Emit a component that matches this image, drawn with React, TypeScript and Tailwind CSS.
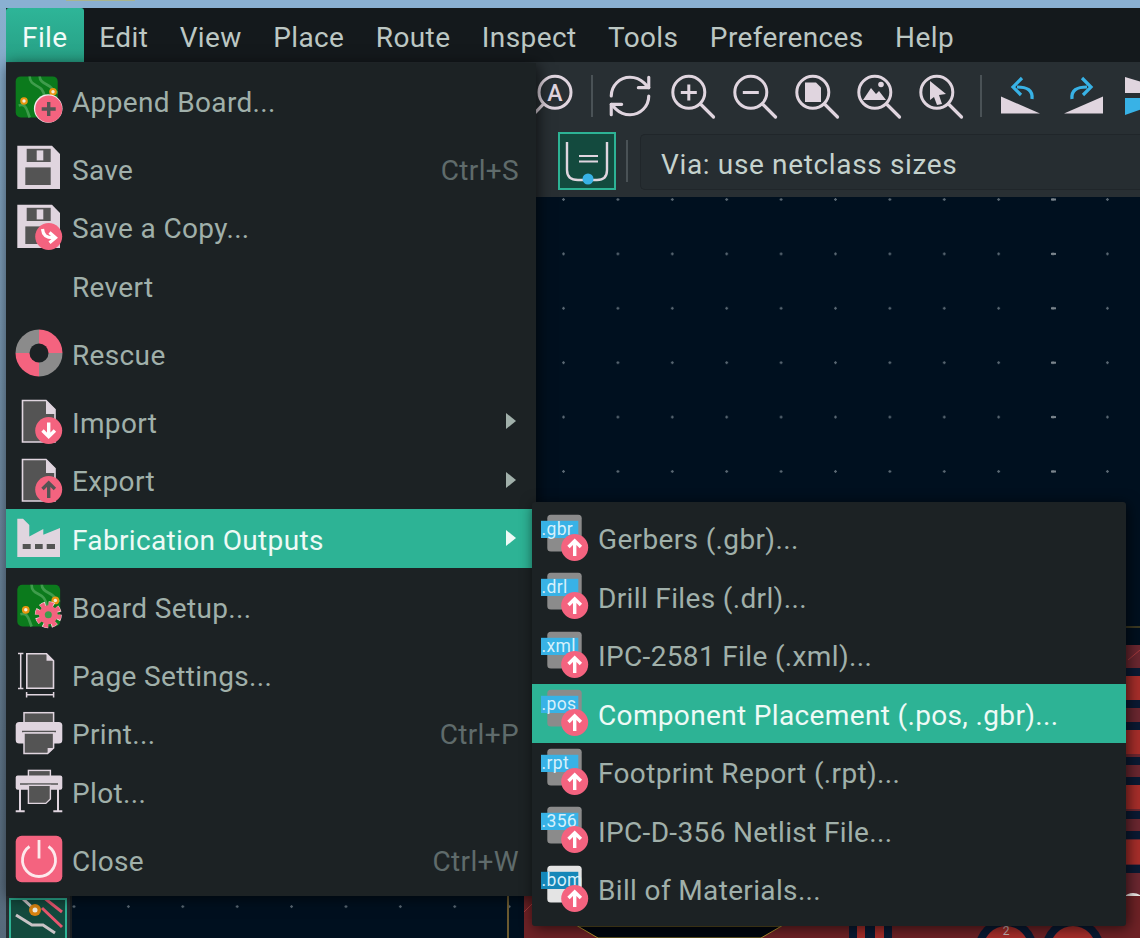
import { ReactNode } from "react";
import { RefreshCw } from "lucide-react";

const LIGHT = "#e0d5df";
const DARK = "#545454";
const PINK = "#f4637f";
const GREY = "#8b8b8b";
const BLUE = "#38b2e6";

const Icon = ({ children }: { children?: ReactNode }) => (
  <svg width="48" height="48" viewBox="0 0 48 48" className="shrink-0">
    {children}
  </svg>
);

// pink round badge that sits on the lower right of most menu icons
const Badge = ({ children, cx = 33.7, cy = 33.5 }: { children?: ReactNode; cx?: number; cy?: number }) => (
  <g>
    <circle cx={cx} cy={cy} r="13.5" fill={PINK} />
    {children}
  </g>
);

const ArrowUp = ({ color = "#fff" }: { color?: string }) => (
  <path d="M33.7 42V27M27.5 33l6.2-6.2 6.2 6.2" fill="none" stroke={color} strokeWidth="3.4" />
);

const ArrowDown = () => (
  <path d="M33.7 25.5v14M27.5 33.5l6.2 6.2 6.2-6.2" fill="none" stroke="#fff" strokeWidth="3.4" />
);

const Floppy = () => (
  <>
    <path d="M2.3 1.8H37L45 10V45H2.3Z" fill={LIGHT} />
    <rect x="11.7" y="4.8" width="24" height="13.2" fill={DARK} />
    <rect x="21.7" y="6.4" width="6.6" height="10" fill={LIGHT} />
    <rect x="10.3" y="23.4" width="25.4" height="17.6" fill={DARK} />
  </>
);

const DocBadge = ({ children }: { children: ReactNode }) => (
  <>
    <path d="M7.5 3.5H31L40 12.5V45H7.5Z" fill={DARK} stroke={LIGHT} strokeWidth="1.6" />
    <path d="M31 3.5L40 12.5V17H31Z" fill={LIGHT} />
    {children}
  </>
);

const BoardBase = ({ x, y, s }: { x: number; y: number; s: number }) => (
  <g transform={`translate(${x} ${y}) scale(${s})`}>
    <rect width="42" height="41" rx="5" fill="#0b7a1c" />
    <path d="M14 0c0 9 8 8 12 13s2 12 8 15M24 0c0 6 6 7 10 10s4 6 8 6M3 29c8-2 8 5 11 12" fill="none" stroke="#3f9c4c" strokeWidth="2.6" />
    <circle cx="8.3" cy="24.6" r="3.8" fill="#e8960f" />
    <circle cx="8.3" cy="24.6" r="1.7" fill="#f4eeda" />
    <circle cx="37.3" cy="15.4" r="3.8" fill="#e8960f" />
    <circle cx="37.3" cy="15.4" r="1.7" fill="#f4eeda" />
  </g>
);

const AppendIcon = () => (
  <Icon>
    <BoardBase x={0.7} y={0.4} s={1} />
    <circle cx="33.2" cy="32.5" r="14.3" fill="#f2ecef" />
    <Badge cy={33}>
      <path d="M33.7 26v14M26.7 33h14" stroke={DARK} strokeWidth="3.4" />
    </Badge>
  </Icon>
);

const SaveIcon = () => (
  <Icon>
    <Floppy />
  </Icon>
);

const SaveCopyIcon = () => (
  <Icon>
    <Floppy />
    <Badge>
      <path d="M27.5 26c.5 6 3.5 8.7 10.5 8.7" fill="none" stroke="#fff" strokeWidth="3.2" />
      <path d="M34.5 29.5l6 5.2-6 5" fill="none" stroke="#fff" strokeWidth="3.2" />
    </Badge>
  </Icon>
);

const RescueIcon = () => (
  <Icon>
    <path d="M24 .5A23.5 23.5 0 0 0 .5 24H24Z" fill={GREY} />
    <path d="M24 .5A23.5 23.5 0 0 1 47.5 24H24Z" fill={PINK} />
    <path d="M24 47.5A23.5 23.5 0 0 1 .5 24H24Z" fill={PINK} />
    <path d="M24 47.5A23.5 23.5 0 0 0 47.5 24H24Z" fill={GREY} />
    <circle cx="24" cy="24" r="9.5" fill="#1c2224" />
  </Icon>
);

const ImportIcon = () => (
  <Icon>
    <DocBadge>
      <Badge>
        <ArrowDown />
      </Badge>
    </DocBadge>
  </Icon>
);

const ExportIcon = () => (
  <Icon>
    <DocBadge>
      <Badge>
        <ArrowUp color={DARK} />
      </Badge>
    </DocBadge>
  </Icon>
);

const FactoryIcon = () => (
  <Icon>
    <path d="M2.3 4.8H8L14.3 11V22.4L28.3 15V20.7L45 14V43H2.3Z" fill={LIGHT} />
    <rect x="7.7" y="30" width="8" height="5" fill={DARK} />
    <rect x="20" y="30" width="7.7" height="5" fill={DARK} />
    <rect x="31.7" y="30" width="8.3" height="5" fill={DARK} />
  </Icon>
);

const BoardSetupIcon = () => (
  <Icon>
    <BoardBase x={2.3} y={2.7} s={1.02} />
    <circle cx="33.3" cy="32.7" r="10.5" fill="none" stroke="#f6e3e6" strokeWidth="6" strokeDasharray="5.2 3.05" />
    <circle cx="33.3" cy="32.7" r="10.5" fill="none" stroke={PINK} strokeWidth="5" strokeDasharray="4.5 3.75" />
    <circle cx="33.3" cy="32.7" r="9.5" fill={PINK} />
    <circle cx="33.3" cy="32.7" r="3.5" fill="#3f9c4c" />
  </Icon>
);

const PageIcon = () => (
  <Icon>
    <path d="M11.8 3.8H31.5L38.5 10.8V38.2H11.8Z" fill={DARK} stroke={LIGHT} strokeWidth="1.6" />
    <path d="M31.5 3.8L38.5 10.8H31.5Z" fill={LIGHT} />
    <path d="M5.7 3v36M3 3.6h5.4M3 38.4h5.4M11 44.7h28.3M11.6 42v5.4M38.6 42v5.4" stroke={LIGHT} strokeWidth="1.5" fill="none" />
  </Icon>
);

const PrintIcon = () => (
  <Icon>
    <rect x="9" y="3.7" width="29.6" height="12" fill={DARK} stroke={LIGHT} strokeWidth="1.5" />
    <rect x=".7" y="13" width="46.6" height="21.6" rx="3.5" fill={LIGHT} />
    <path d="M7 22.6H41" stroke={DARK} strokeWidth="1.5" />
    <path d="M9 24H38.6V39L32.6 44.6H9Z" fill={DARK} stroke={LIGHT} strokeWidth="1.5" />
    <path d="M32.6 44.6V39H38.6Z" fill={LIGHT} />
  </Icon>
);

const PlotIcon = () => (
  <Icon>
    <rect x="13.4" y="3.4" width="22" height="8" fill={DARK} stroke={LIGHT} strokeWidth="1.4" />
    <rect x=".7" y="8.4" width="46.6" height="14.3" rx="2" fill={LIGHT} />
    <path d="M5 17H43" stroke={DARK} strokeWidth="1.4" />
    <path d="M5 22v21.8M43 22v21.8M.7 44.2h9M38.3 44.2h9" stroke={LIGHT} strokeWidth="2" fill="none" />
    <path d="M13.4 18.4H35.4V32L30.8 36.4H13.4Z" fill={DARK} stroke={LIGHT} strokeWidth="1.4" />
  </Icon>
);

const CloseIcon = () => (
  <Icon>
    <rect x=".7" y=".7" width="46.6" height="46.6" rx="6" fill={PINK} />
    <path d="M14.5 11.5A16.5 16.5 0 1 0 33.5 11.5" fill="none" stroke="#fde9ec" strokeWidth="2.8" />
    <path d="M24 5v18.5" stroke="#fde9ec" strokeWidth="2.8" />
  </Icon>
);

const ExtIcon = ({ ext, bom }: { ext: string; bom?: boolean }) => (
  <Icon>
    <rect x="6.3" y=".8" width="34.4" height="36.6" rx="3.5" fill={bom ? "#e4e4e4" : GREY} />
    <rect y="6.8" width="37.3" height="17.2" fill={bom ? "#1587b8" : BLUE} />
    <text x=".5" y="20.5" fontSize="17.5" fill="#d6f0fb" fontFamily="Roboto, sans-serif">
      {ext}
    </text>
    <Badge>
      <ArrowUp />
    </Badge>
  </Icon>
);

type Item = { label: string; icon?: ReactNode; shortcut?: string; submenu?: boolean; active?: boolean };

const fileMenu: (Item | "sep")[] = [
  { label: "Append Board...", icon: <AppendIcon /> },
  "sep",
  { label: "Save", icon: <SaveIcon />, shortcut: "Ctrl+S" },
  { label: "Save a Copy...", icon: <SaveCopyIcon /> },
  { label: "Revert" },
  "sep",
  { label: "Rescue", icon: <RescueIcon /> },
  "sep",
  { label: "Import", icon: <ImportIcon />, submenu: true },
  { label: "Export", icon: <ExportIcon />, submenu: true },
  { label: "Fabrication Outputs", icon: <FactoryIcon />, submenu: true, active: true },
  "sep",
  { label: "Board Setup...", icon: <BoardSetupIcon /> },
  "sep",
  { label: "Page Settings...", icon: <PageIcon /> },
  { label: "Print...", icon: <PrintIcon />, shortcut: "Ctrl+P" },
  { label: "Plot...", icon: <PlotIcon /> },
  "sep",
  { label: "Close", icon: <CloseIcon />, shortcut: "Ctrl+W" },
];

const fabMenu: Item[] = [
  { label: "Gerbers (.gbr)...", icon: <ExtIcon ext=".gbr" /> },
  { label: "Drill Files (.drl)...", icon: <ExtIcon ext=".drl" /> },
  { label: "IPC-2581 File (.xml)...", icon: <ExtIcon ext=".xml" /> },
  { label: "Component Placement (.pos, .gbr)...", icon: <ExtIcon ext=".pos" />, active: true },
  { label: "Footprint Report (.rpt)...", icon: <ExtIcon ext=".rpt" /> },
  { label: "IPC-D-356 Netlist File...", icon: <ExtIcon ext=".356" /> },
  { label: "Bill of Materials...", icon: <ExtIcon ext=".bom" bom /> },
];

const MenuRow = ({ label, icon, shortcut, submenu, active }: Item) => (
  <div className={`h-[58.5px] flex items-center pl-[9px] pr-[17px] tracking-[0.35px] ${active ? "bg-[#2db395] text-[#eefaf6]" : "text-[#a0b0aa]"}`}>
    {icon ?? <div className="w-12 h-12 shrink-0" />}
    <span className="ml-[9px] pt-[5px] leading-none">{label}</span>
    {shortcut && <span className="ml-auto pt-[5px] leading-none text-[#5f6b6b]">{shortcut}</span>}
    {submenu && (
      <div className={`ml-auto mr-[3px] w-0 h-0 border-y-[8px] border-y-transparent border-l-[10px] ${active ? "border-l-[#eefaf6]" : "border-l-[#a0b0aa]"}`} />
    )}
  </div>
);

const Magnifier = ({ children }: { children?: ReactNode }) => (
  <Icon>
    <circle cx="20.8" cy="20.3" r="16" fill="none" stroke={LIGHT} strokeWidth="3" />
    <path d="M32.5 32l13 13" stroke={LIGHT} strokeWidth="3.2" strokeLinecap="round" />
    {children}
  </Icon>
);

const UndoIcon = ({ flip }: { flip?: boolean }) => (
  <svg width="48" height="48" viewBox="0 0 48 48" className={`shrink-0 ${flip ? "-scale-x-100" : ""}`}>
    <path d="M4 24.5L43 41.5H4Z" fill={LIGHT} />
    <path d="M35 27C36 18 30 15 20 15" fill="none" stroke={BLUE} strokeWidth="3.2" />
    <path d="M25 6L16 15L24 23" fill="none" stroke={BLUE} strokeWidth="3.2" />
  </svg>
);

const menuNames = ["Edit", "View", "Place", "Route", "Inspect", "Tools", "Preferences", "Help"];

export default function App() {
  return (
    <div className="relative w-[1140px] h-[938px] overflow-hidden flex flex-col bg-gradient-to-b from-[#8ab0cf] to-[#56697a] [font-family:Roboto,sans-serif] text-[28px]">
      {/* window manager strip */}
      <div className="h-[8px] shrink-0 bg-[#8ab0d2]">
        <div className="ml-[66px] w-[69px] h-[1px] bg-[#a9b58f]" />
      </div>

      <div className="flex-1 min-h-0 ml-[6px] flex flex-col">
        <div className="h-[54px] shrink-0 flex bg-[#14191c] text-[#bcc7c3] tracking-[0.4px]">
          <div className="px-[16px] pt-[6px] flex items-center rounded-t-[3px] bg-gradient-to-b from-[#2eb598] to-[#27a085] text-[#f2fbf8] leading-none">
            File
          </div>
          {menuNames.map((name) => (
            <div key={name} className="px-[15.7px] pt-[6px] flex items-center leading-none">
              {name}
            </div>
          ))}
        </div>

        {/* top toolbar, the left part of it is hidden under the open menu */}
        <div className="h-[67px] shrink-0 flex items-center pl-[525px] gap-[14px] bg-[#282f33] overflow-hidden">
          <Icon>
            <circle cx="24" cy="20.3" r="16" fill="none" stroke={LIGHT} strokeWidth="3" />
            <path d="M12.5 32L0 45" stroke={LIGHT} strokeWidth="3.2" strokeLinecap="round" />
            <text x="24" y="28.5" textAnchor="middle" fontSize="23" fontWeight="500" fill={LIGHT} fontFamily="Roboto, sans-serif">
              A
            </text>
          </Icon>
          <div className="w-[2px] h-[42px] shrink-0 -mx-[2px] bg-[#4a5256]" />
          <RefreshCw size={50} color={LIGHT} strokeWidth={1.5} className="shrink-0 -mr-[1px]" />
          <Magnifier>
            <path d="M20.8 12.5v16M12.8 20.5h16" stroke={LIGHT} strokeWidth="3" />
          </Magnifier>
          <Magnifier>
            <path d="M12.8 20.5h16" stroke={LIGHT} strokeWidth="3" />
          </Magnifier>
          <Magnifier>
            <path d="M13 10.5H24L29 15.5V30H13Z" fill={LIGHT} />
          </Magnifier>
          <Magnifier>
            <path d="M9 28L17 16L22 22L25 19L32 28Z" fill={LIGHT} />
            <circle cx="27" cy="12.5" r="2.8" fill={LIGHT} />
          </Magnifier>
          <Magnifier>
            <path d="M14 9L30 22L23 23L26 32L21 33L18 25L14 28Z" fill={LIGHT} />
          </Magnifier>
          <div className="w-[2px] h-[42px] shrink-0 ml-[2px] mr-[1px] bg-[#4a5256]" />
          <UndoIcon />
          <UndoIcon flip />
          <svg width="48" height="48" viewBox="0 0 48 48" className="shrink-0">
            <path d="M4 5L30 13V21H4Z" fill={LIGHT} />
            <path d="M4 26H30V34L4 43Z" fill={BLUE} />
          </svg>
        </div>

        <div className="h-[68px] shrink-0 flex items-center pl-[552px] pb-[4px] bg-[#282f33] overflow-hidden">
          <div className="w-[58px] h-[58px] shrink-0 border-2 border-[#2db395] bg-[#134a3e]">
            <svg width="54" height="54" viewBox="0 0 54 54">
              <path d="M7 8V36C7 43 11 46 18 46H37C43 46 47 43 47 36V8" fill="none" stroke={LIGHT} strokeWidth="2.4" />
              <path d="M19 22H38M19 27.5H38" stroke={LIGHT} strokeWidth="2.2" />
              <circle cx="28" cy="45" r="5.5" fill={BLUE} />
            </svg>
          </div>
          <div className="w-[2px] h-[42px] shrink-0 ml-[10px] mr-[12px] bg-[#4a5256]" />
          <div className="flex-1 h-[56px] mt-[2px] flex items-center pl-[20px] pt-[6px] rounded-l-[5px] border border-r-0 border-[#20262a] bg-[#262d31] text-[#c5d2cd] leading-none tracking-[0.65px]">
            Via: use netclass sizes
          </div>
        </div>

        <div className="flex-1 min-h-0 flex">
          <div className="w-[66px] shrink-0 flex flex-col justify-end items-start bg-[#282f33] border-r-2 border-[#1b2023]">
            <div className="w-[58px] h-[58px] shrink-0 ml-[3px] -mb-[18px] border-2 border-[#2db395] bg-[#134a3e]">
              <svg width="54" height="54" viewBox="0 0 54 54">
                <path d="M32 -3L51 12M31 8L51 27" fill="none" stroke="#e8566f" strokeWidth="3" />
                <path d="M11 -2L24 10M5 15L21 25H32L44 33" fill="none" stroke="#c9c3c6" strokeWidth="3" />
                <circle cx="24" cy="10" r="6" fill="#d98310" />
                <circle cx="24" cy="10" r="2.5" fill="#f2eee0" />
              </svg>
            </div>
          </div>
          <div className="relative flex-1 bg-[#00101f] bg-[radial-gradient(circle,#5a6873_1px,transparent_1.5px)] bg-[length:54.4px_54.4px] bg-[position:-25.2px_-24.7px]">
            {/* board drawing, coordinates are page pixels */}
            <svg className="absolute left-0 top-0" width="1068" height="741" viewBox="72 197 1068 741">
              {Array.from({ length: 14 }, (_, i) => (
                <rect key={i} x="1051" y={198.5 + i * 54.4} width="5" height="2" fill="#7a848c" />
              ))}
              <path d="M1126 627H1140" stroke="#3d3a22" strokeWidth="2" />
              <path d="M508 896V938" stroke="#6b5a30" strokeWidth="2" />
              <rect x="1126" y="645" width="14" height="293" fill="#6b2730" />
              <path d="M1128 660L1140 650" stroke="#a83a3c" strokeWidth="1" />
              {[668, 700, 722, 757, 777, 811, 831, 865].map((y) => (
                <rect key={y} x="1126" y={y} width="14" height="8" fill="#0a1a33" />
              ))}
              {[676, 730, 785, 840].map((y) => (
                <rect key={y} x="1126" y={y} width="14" height="24" fill="#a72e2a" />
              ))}
              <circle cx="1133" cy="906" r="13" fill="#f1ecea" />
              <circle cx="1133" cy="906" r="6.5" fill="#d9a21c" />
              <rect x="524" y="896" width="616" height="42" fill="#6e2226" />
              <path d="M524 912L536 900" stroke="#a83a3c" strokeWidth="1" />
              <path d="M577.5 926L598 938H761L781.6 926Z" fill="#00060f" stroke="#b39432" strokeWidth="1" />
              <rect x="849" y="926" width="8" height="12" fill="#0a1a33" />
              <rect x="857" y="926" width="8" height="12" fill="#a72e2a" />
              <rect x="865" y="926" width="10" height="12" fill="#0a1a33" />
              <rect x="875" y="926" width="9" height="12" fill="#a72e2a" />
              <rect x="884" y="926" width="8" height="12" fill="#0a1a33" />
              <circle cx="1006" cy="948.7" r="30.5" fill="#0a1a33" />
              <circle cx="1006" cy="948.7" r="22.7" fill="#a72e2a" />
              <circle cx="1073" cy="948.7" r="30.5" fill="#0a1a33" />
              <circle cx="1073" cy="948.7" r="22.7" fill="#a72e2a" />
              <text x="1006" y="935" textAnchor="middle" fontSize="12" fill="#c8b7b7" fontFamily="Roboto, sans-serif">
                2
              </text>
            </svg>
          </div>
        </div>
      </div>

      <div className="absolute left-[6px] top-[63px] w-[530px] pt-[8px] pb-[7.5px] bg-[#1c2224] shadow-[2px_2px_14px_rgba(0,0,0,0.65)]">
        {fileMenu.map((item, i) =>
          item === "sep" ? <div key={i} className="h-[9.5px]" /> : <MenuRow key={item.label} {...item} />,
        )}
      </div>

      <div className="absolute left-[532px] top-[502px] w-[594px] pt-[6.5px] pb-[8px] rounded-[3px] bg-[#1c2224] shadow-[2px_2px_14px_rgba(0,0,0,0.65)]">
        {fabMenu.map((item) => (
          <MenuRow key={item.label} {...item} />
        ))}
      </div>
    </div>
  );
}
